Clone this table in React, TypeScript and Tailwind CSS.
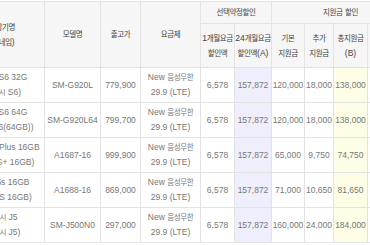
import React from 'react';

const rows = [
  { name: '갤럭시 S6 32G', pet: '(갤럭시 S6)', model: 'SM-G920L', price: '779,900', base: '120,000', extra: '18,000', total: '138,000' },
  { name: '갤럭시 S6 64G', pet: '(갤럭시S6(64GB))', model: 'SM-G920L64', price: '799,700', base: '120,000', extra: '18,000', total: '138,000' },
  { name: '아이폰 6S Plus 16GB', pet: '(아이폰6S+ 16GB)', model: 'A1687-16', price: '999,900', base: '65,000', extra: '9,750', total: '74,750' },
  { name: '아이폰 6s 16GB', pet: '(아이폰6S 16GB)', model: 'A1688-16', price: '869,000', base: '71,000', extra: '10,650', total: '81,650' },
  { name: '갤럭시 J5', pet: '(갤럭시 J5)', model: 'SM-J500N0', price: '297,000', base: '160,000', extra: '24,000', total: '184,000' },
];

// hangul runs get a narrower setting so they fit like the original page font
function ko(text: string) {
  return text.split(/([가-힣]+)/).map((part, i) =>
    /[가-힣]/.test(part) ? (
      <span key={i} className="text-[7.5px] tracking-[-0.4px]">{part}</span>
    ) : (
      part
    )
  );
}

const th = 'border border-[#e3e3e3] font-normal text-[#444] align-middle text-center leading-[14px] p-0 whitespace-nowrap';
const td = 'border border-[#e3e3e3] text-[#777] align-middle text-center leading-[15px] p-0 whitespace-nowrap';

export default function App() {
  return (
    <div className="w-[370px] h-[245px] overflow-hidden bg-white">
      <table
        className="ml-[-41px] mt-[1px] w-[450px] table-fixed border-collapse text-[8.5px]"
        style={{ fontFamily: '"Liberation Sans", "Noto Sans CJK KR", sans-serif' }}
      >
        <colgroup>
          <col className="w-[85px]" />
          <col className="w-[56px]" />
          <col className="w-[40px]" />
          <col className="w-[60px]" />
          <col className="w-[34px]" />
          <col className="w-[37px]" />
          <col className="w-[33px]" />
          <col className="w-[29px]" />
          <col className="w-[34px]" />
          <col className="w-[42px]" />
        </colgroup>
        <thead className="bg-[#f6f6f6]">
          <tr className="h-[22px]">
            <th rowSpan={2} className={th}>{ko('단말기명')}<br />{ko('(펫네임)')}</th>
            <th rowSpan={2} className={th}>{ko('모델명')}</th>
            <th rowSpan={2} className={th}>{ko('출고가')}</th>
            <th rowSpan={2} className={th}>{ko('요금제')}</th>
            <th colSpan={2} className={th}>{ko('선택약정할인')}</th>
            <th colSpan={4} className={th}>{ko('지원금 할인')}</th>
          </tr>
          <tr className="h-[44px]">
            <th className={th}>{ko('1개월요금')}<br />{ko('할인액')}</th>
            <th className={th}>{ko('24개월요금')}<br />{ko('할인액(A)')}</th>
            <th className={th}>{ko('기본')}<br />{ko('지원금')}</th>
            <th className={th}>{ko('추가')}<br />{ko('지원금')}</th>
            <th className={th}>{ko('총지원금')}<br />(B)</th>
            <th className={th}></th>
          </tr>
        </thead>
        <tbody>
          {rows.map((r) => (
            <tr key={r.model} className="h-[35px]">
              <td className={td}>{ko(r.name)}<br />{ko(r.pet)}</td>
              <td className={td}>{r.model}</td>
              <td className={td}>{r.price}</td>
              <td className={td}>New {ko('음성무한')}<br />29.9 (LTE)</td>
              <td className={td}>6,578</td>
              <td className={`${td} bg-[#eeeefc]`}>157,872</td>
              <td className={td}>{r.base}</td>
              <td className={td}>{r.extra}</td>
              <td className={`${td} bg-[#fefee6]`}>{r.total}</td>
              <td className={td}></td>
            </tr>
          ))}
        </tbody>
      </table>
    </div>
  );
}
